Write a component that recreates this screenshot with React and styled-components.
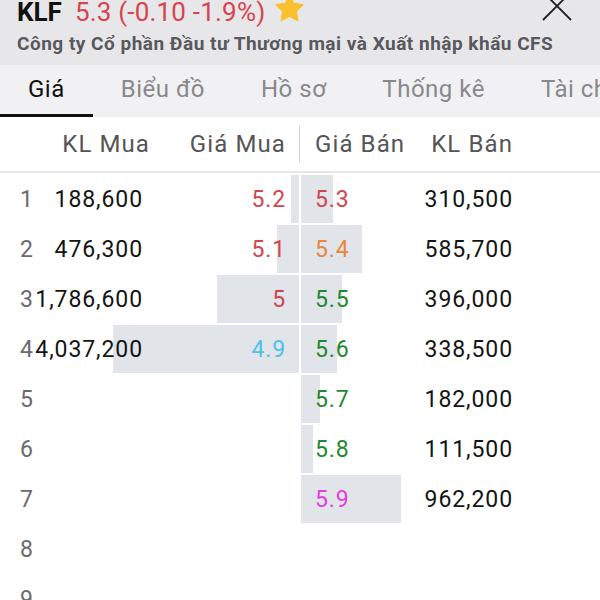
import styled, { createGlobalStyle } from 'styled-components';

const GlobalStyle = createGlobalStyle`
  html, body {
    margin: 0;
    padding: 0;
    background: #fff;
    font-family: Roboto, "Noto Sans", sans-serif;
  }
`

const buys = [
  { vol: '188,600', price: '5.2', color: '#d2454e', bar: 8 },
  { vol: '476,300', price: '5.1', color: '#d2454e', bar: 22 },
  { vol: '1,786,600', price: '5', color: '#d2454e', bar: 82 },
  { vol: '4,037,200', price: '4.9', color: '#4cc2e8', bar: 186 },
]

const sells = [
  { vol: '310,500', price: '5.3', color: '#d2454e', bar: 32 },
  { vol: '585,700', price: '5.4', color: '#e8853e', bar: 61 },
  { vol: '396,000', price: '5.5', color: '#1f8a2c', bar: 41 },
  { vol: '338,500', price: '5.6', color: '#1f8a2c', bar: 36 },
  { vol: '182,000', price: '5.7', color: '#1f8a2c', bar: 19 },
  { vol: '111,500', price: '5.8', color: '#1f8a2c', bar: 12 },
  { vol: '962,200', price: '5.9', color: '#e03ee0', bar: 100 },
]

const tabs = ['Giá', 'Biểu đồ', 'Hồ sơ', 'Thống kê', 'Tài chính']

export default function App() {
  const rows = Array.from({ length: 9 }, (_, i) => i)

  return (
    <Screen>
      <GlobalStyle />
      <Header>
        <TitleRow>
          <Symbol>KLF</Symbol>
          <Change>5.3 (-0.10 -1.9%)</Change>
          <Star viewBox="0 0 24 24">
            <path d="M12 1.8l3.1 6.4 7 1-5.1 4.9 1.2 7L12 17.8l-6.2 3.3 1.2-7L1.9 9.2l7-1z" fill="#fbc02d" stroke="#fbc02d" strokeWidth="1.4" strokeLinejoin="round" />
          </Star>
          <Close viewBox="0 0 32 32">
            <path d="M2 2L30 30M30 2L2 30" stroke="#222" strokeWidth="1.8" />
          </Close>
        </TitleRow>
        <Company>Công ty Cổ phần Đầu tư Thương mại và Xuất nhập khẩu CFS</Company>
      </Header>

      <Tabs>
        {tabs.map((t, i) => (
          <Tab key={t} $active={i === 0}>{t}</Tab>
        ))}
      </Tabs>

      <ColumnHead>
        <HeadBuy>
          <HeadLabel>KL Mua</HeadLabel>
          <HeadLabel>Giá Mua</HeadLabel>
        </HeadBuy>
        <HeadDivider />
        <HeadSell>
          <HeadLabel>Giá Bán</HeadLabel>
          <HeadLabel>KL Bán</HeadLabel>
        </HeadSell>
      </ColumnHead>

      <Book>
        {rows.map((i) => {
          const b = buys[i]
          const s = sells[i]
          return (
            <Row key={i}>
              <BuySide>
                {b && <Bar $buy style={{ width: b.bar }} />}
                <VolCell>
                  <Index>{i + 1}</Index>
                  {b && <Vol>{b.vol}</Vol>}
                </VolCell>
                {b && <BuyPrice $color={b.color}>{b.price}</BuyPrice>}
              </BuySide>
              <SellSide>
                {s && <Bar style={{ width: s.bar }} />}
                {s && <SellPrice $color={s.color}>{s.price}</SellPrice>}
                {s && <SellVol>{s.vol}</SellVol>}
              </SellSide>
            </Row>
          )
        })}
      </Book>
    </Screen>
  )
}

const Screen = styled.div`
  width: 600px;
  height: 600px;
  overflow: hidden;
  background: #fff;
`

const Header = styled.header`
  height: 65px;
  background: #e7e7e9;
  padding-left: 17px;
  box-sizing: border-box;
`

const TitleRow = styled.div`
  display: flex;
  align-items: flex-start;
  height: 24px;
  line-height: 24px;
  font-size: 26px;
`

const Symbol = styled.span`
  font-weight: 700;
  color: #111;
  margin-right: 13px;
`

const Change = styled.span`
  color: #d8434c;
  letter-spacing: 0.2px;
`

const Star = styled.svg`
  width: 31px;
  height: 31px;
  margin: -7px 0 0 9px;
  flex: none;
`

const Close = styled.svg`
  width: 32px;
  height: 32px;
  margin: -10px 27px 0 auto;
  flex: none;
`

const Company = styled.div`
  margin-top: 9px;
  font-size: 19px;
  line-height: 22px;
  font-weight: 700;
  letter-spacing: 0.5px;
  color: #58585d;
  white-space: nowrap;
`

const Tabs = styled.nav`
  display: flex;
  height: 52px;
  background: #f1f1f3;
  overflow: hidden;
  white-space: nowrap;
`

const Tab = styled.div`
  flex: none;
  padding: 0 28px;
  font-size: 24px;
  letter-spacing: 0.5px;
  line-height: 49px;
  color: ${(p) => (p.$active ? '#111' : '#88888d')};
  border-bottom: 3px solid ${(p) => (p.$active ? '#111' : 'transparent')};
`

const ColumnHead = styled.div`
  display: grid;
  grid-template-columns: 299px 2px 299px;
  align-items: center;
  height: 54px;
  border-bottom: 2px solid #e6e6e8;
  font-size: 24px;
  letter-spacing: 1.1px;
  color: #555;
`

const HeadBuy = styled.div`
  display: grid;
  grid-template-columns: 150px 1fr;
  padding-right: 13px;
  justify-items: end;
`

const HeadSell = styled.div`
  display: grid;
  grid-template-columns: 1fr auto;
  padding: 0 87px 0 14px;
`

const HeadLabel = styled.span``

const HeadDivider = styled.div`
  width: 1px;
  height: 36px;
  background: #d5d5d8;
`

const Book = styled.div`
  display: flex;
  flex-direction: column;
  gap: 2px;
  padding-top: 2px;
`

const Row = styled.div`
  display: grid;
  grid-template-columns: 299px 299px;
  column-gap: 2px;
  height: 48px;
  font-size: 23px;
  letter-spacing: 0.9px;
`

const Half = styled.div`
  position: relative;
  display: grid;
  align-items: center;
`

const BuySide = styled(Half)`
  grid-template-columns: 143px 1fr;
  padding-right: 13px;
`

const SellSide = styled(Half)`
  grid-template-columns: 1fr auto;
  padding: 0 87px 0 14px;
`

const Bar = styled.div`
  position: absolute;
  top: 0;
  bottom: 0;
  ${(p) => (p.$buy ? 'right: 0;' : 'left: 0;')}
  background: #e1e5ea;
`

const VolCell = styled.div`
  position: relative;
  display: grid;
  align-items: center;
`

const Index = styled.span`
  grid-area: 1 / 1;
  justify-self: start;
  padding-left: 20px;
  color: #6a6a6e;
  letter-spacing: 0;
`

const Vol = styled.span`
  grid-area: 1 / 1;
  justify-self: end;
  position: relative;
  color: #141414;
`

const SellVol = styled.span`
  position: relative;
  color: #141414;
`

const BuyPrice = styled.span`
  position: relative;
  justify-self: end;
  color: ${(p) => p.$color};
`

const SellPrice = styled.span`
  position: relative;
  justify-self: start;
  color: ${(p) => p.$color};
`
